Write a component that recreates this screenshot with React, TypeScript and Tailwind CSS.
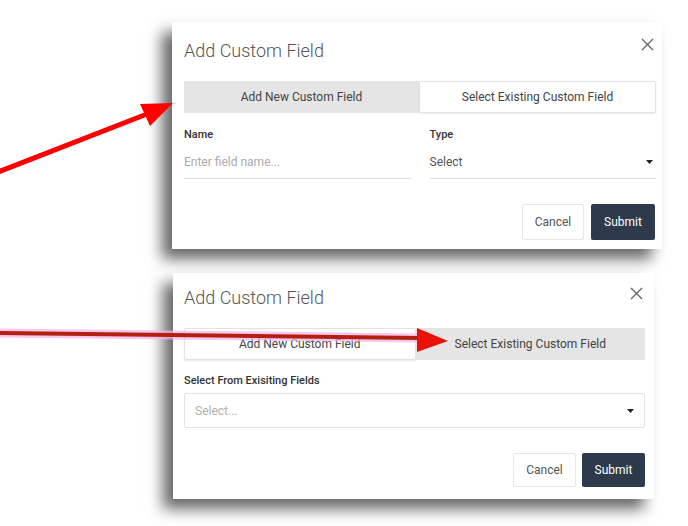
import React from "react";

function CloseX() {
  return (
    <svg width="13" height="13" viewBox="0 0 13 13" className="block">
      <path d="M1 1 L12 12 M12 1 L1 12" stroke="#666" strokeWidth="1.4" fill="none" />
    </svg>
  );
}

function Caret() {
  return (
    <svg width="7" height="4" viewBox="0 0 7 4" className="block">
      <path d="M0 0 L7 0 L3.5 4 Z" fill="#222" />
    </svg>
  );
}

function Tabs({ active }: { active: 0 | 1 }) {
  const on = "flex-1 flex items-center justify-center bg-[#e5e5e5] text-[12px] text-[#444]";
  const off =
    "flex-1 flex items-center justify-center bg-white border border-[#e2e2e2] rounded-[2px] shadow-[0_1px_2px_rgba(0,0,0,0.08)] text-[12px] text-[#444]";
  return (
    <div className="flex h-[32px]">
      <div className={active === 0 ? on : off}>Add New Custom Field</div>
      <div className={active === 1 ? on : off}>Select Existing Custom Field</div>
    </div>
  );
}

export default function App() {
  return (
    <div className="relative w-[688px] h-[526px] bg-white overflow-hidden font-['Roboto',sans-serif] pt-[22px]">
      {/* Dialog 1 */}
      <div className="ml-[172px] w-[490px] bg-white pl-[12px] pr-[6px] pt-[17px] pb-[9px] shadow-[-10px_10px_14px_rgba(0,0,0,0.6)]">
        <div className="flex justify-between items-start">
          <div className="text-[18px] leading-[24px] font-light text-[#555]">Add Custom Field</div>
          <div className="-mt-[1px] mr-[2px]">
            <CloseX />
          </div>
        </div>
        <div className="mt-[18px]">
          <Tabs active={0} />
        </div>
        <div className="mt-[15px] grid grid-cols-2 gap-x-[19px]">
          <div>
            <div className="text-[11px] leading-[14px] font-medium text-[#333]">Name</div>
            <div className="mt-[4px] h-[33px] border-b border-[#dcdcdc] flex items-center text-[12px] text-[#aaa]">
              Enter field name...
            </div>
          </div>
          <div>
            <div className="text-[11px] leading-[14px] font-medium text-[#333]">Type</div>
            <div className="mt-[4px] h-[33px] border-b border-[#dcdcdc] flex items-center justify-between text-[12px] text-[#555]">
              <span>Select</span>
              <span className="mr-[3px]">
                <Caret />
              </span>
            </div>
          </div>
        </div>
        <div className="mt-[25px] flex justify-end gap-[7px] mr-[1px]">
          <div className="w-[62px] h-[36px] flex items-center justify-center border border-[#e6e6e6] rounded-[2px] text-[12px] text-[#555] bg-white">
            Cancel
          </div>
          <div className="w-[64px] h-[36px] flex items-center justify-center rounded-[2px] bg-[#2d3a4b] text-[12px] text-white">
            Submit
          </div>
        </div>
      </div>

      {/* Dialog 2 */}
      <div className="mt-[24px] ml-[173px] w-[481px] bg-white pl-[11px] pr-[9px] pt-[13px] pb-[12px] shadow-[-10px_10px_14px_rgba(0,0,0,0.6)]">
        <div className="flex justify-between items-start">
          <div className="text-[18px] leading-[24px] font-light text-[#555]">Add Custom Field</div>
          <div className="mt-[1px] mr-[2px]">
            <CloseX />
          </div>
        </div>
        <div className="mt-[18px]">
          <Tabs active={1} />
        </div>
        <div className="mt-[14px] text-[11px] leading-[14px] font-medium text-[#333]">Select From Exisiting Fields</div>
        <div className="mt-[5px] h-[35px] border border-[#e3e3e3] rounded-[2px] flex items-center justify-between pl-[10px] pr-[10px] text-[12px] text-[#b0b0b0]">
          <span>Select...</span>
          <Caret />
        </div>
        <div className="mt-[25px] flex justify-end gap-[6px]">
          <div className="w-[63px] h-[34px] flex items-center justify-center border border-[#e6e6e6] rounded-[2px] text-[12px] text-[#555] bg-white">
            Cancel
          </div>
          <div className="w-[63px] h-[34px] flex items-center justify-center rounded-[2px] bg-[#2d3a4b] text-[12px] text-white">
            Submit
          </div>
        </div>
      </div>

      {/* Arrows overlay */}
      <svg className="absolute left-0 top-0 pointer-events-none" width="688" height="526" viewBox="0 0 688 526">
        <line x1="-2" y1="172" x2="147" y2="114" stroke="#ff0000" strokeWidth="5" />
        <polygon points="173,103 150,126 140,104" fill="#ff0000" />
        <line x1="0" y1="333" x2="420" y2="338" stroke="#f5b0e8" strokeWidth="9" opacity="0.7" />
        <line x1="0" y1="333" x2="420" y2="338" stroke="#b3200f" strokeWidth="4" />
        <polygon points="448,341 417,328 417,352" fill="#e8120a" />
      </svg>
    </div>
  );
}
